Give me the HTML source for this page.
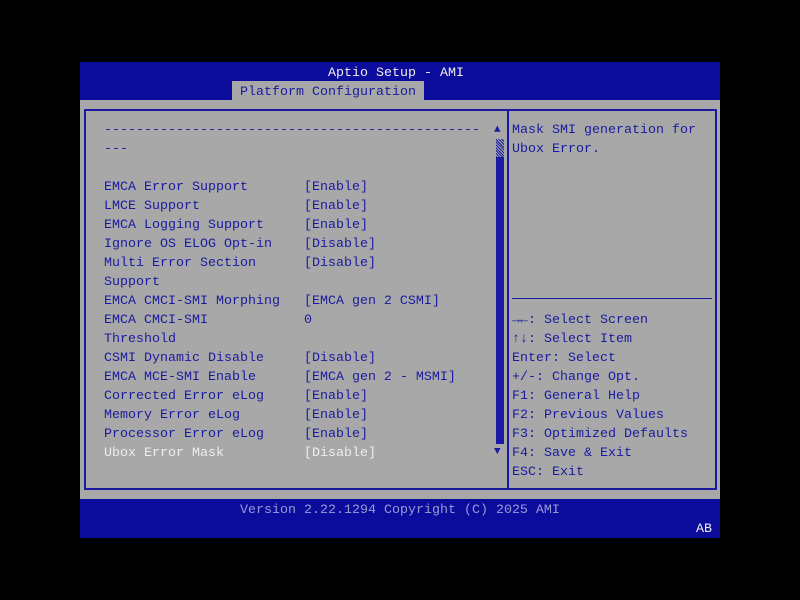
<!DOCTYPE html>
<html><head><style>
body{margin:0;width:800px;height:600px;background:#000;overflow:hidden;font-family:"Liberation Mono",monospace;font-size:13.33px;}
.w{position:absolute;left:80px;top:62px;width:640px;height:476px;background:#a8a8a8;}
.b{position:absolute;background:#0b0b9c;}
.t{position:absolute;white-space:pre;line-height:19px;color:#1a1aa0;}
.wh{color:#ededed;}
.ln{position:absolute;background:#1a1aa0;}
</style></head><body>
<div class="w"></div>
<div class="b" style="left:80px;top:62px;width:640px;height:38px"></div>
<div class="b" style="left:80px;top:499px;width:640px;height:39px"></div>
<div class="t wh" style="left:328px;top:64px">Aptio Setup - AMI</div>
<div style="position:absolute;left:232px;top:81px;width:192px;height:19px;background:#a8a8a8"></div>
<div class="t" style="left:240px;top:83px">Platform Configuration</div>
<div class="ln" style="left:84px;top:109px;width:633px;height:2px"></div>
<div class="ln" style="left:84px;top:488px;width:633px;height:2px"></div>
<div class="ln" style="left:84px;top:109px;width:2px;height:381px"></div>
<div class="ln" style="left:715px;top:109px;width:2px;height:381px"></div>
<div class="ln" style="left:507px;top:109px;width:2px;height:381px"></div>
<div class="ln" style="left:512px;top:298px;width:200px;height:1px"></div>
<div style="position:absolute;left:496px;top:139px;width:8px;height:18px;background:repeating-linear-gradient(45deg,#1a1aa0 0 1px,#a8a8a8 1px 2px)"></div>
<div class="ln" style="left:496px;top:157px;width:8px;height:287px"></div>
<div class="t" style="left:494px;top:121px;font-size:11px">▲</div>
<div class="t" style="left:494px;top:443px;font-size:11px">▼</div>
<div class="t" style="left:104px;top:121px">-----------------------------------------------
---

EMCA Error Support       [Enable]
LMCE Support             [Enable]
EMCA Logging Support     [Enable]
Ignore OS ELOG Opt-in    [Disable]
Multi Error Section      [Disable]
Support
EMCA CMCI-SMI Morphing   [EMCA gen 2 CSMI]
EMCA CMCI-SMI            0
Threshold
CSMI Dynamic Disable     [Disable]
EMCA MCE-SMI Enable      [EMCA gen 2 - MSMI]
Corrected Error eLog     [Enable]
Memory Error eLog        [Enable]
Processor Error eLog     [Enable]</div>
<div class="t wh" style="left:104px;top:444px">Ubox Error Mask          [Disable]</div>
<div class="t" style="left:512px;top:121px">Mask SMI generation for
Ubox Error.</div>
<div class="t" style="left:512px;top:311px"><b>→←</b>: Select Screen
<b>↑↓</b>: Select Item
Enter: Select
+/-: Change Opt.
F1: General Help
F2: Previous Values
F3: Optimized Defaults
F4: Save &amp; Exit
ESC: Exit</div>
<div class="t" style="left:240px;top:501px;color:#9a9ad8">Version 2.22.1294 Copyright (C) 2025 AMI</div>
<div class="t wh" style="left:696px;top:520px">AB</div>
</body></html>
